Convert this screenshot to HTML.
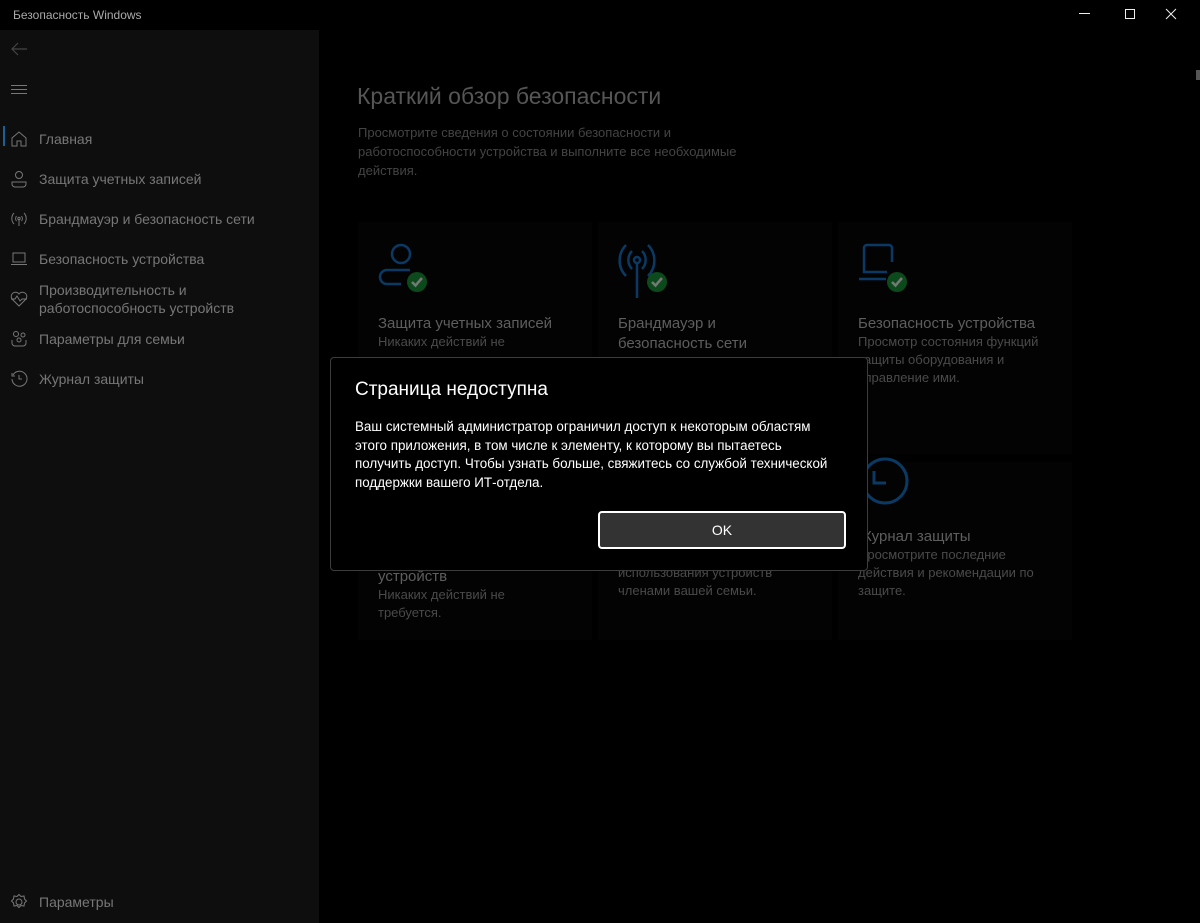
<!DOCTYPE html>
<html><head><meta charset="utf-8"><style>
*{margin:0;padding:0;box-sizing:border-box}
body{width:1200px;height:923px;background:#000;font-family:"Liberation Sans","Noto Sans CJK SC",sans-serif;position:relative;overflow:hidden;color:#777}
.abs{position:absolute}
.side{left:0;top:30px;width:319px;height:893px;background:#0e0e0e}
.nav{position:absolute;left:39px;font-size:14px;color:#777;line-height:18px}
.ic{position:absolute;left:10px}
.card{position:absolute;background:#030303}
.ct{position:absolute;font-size:15px;color:#5e5e5e;line-height:20px}
.cd{position:absolute;font-size:13px;color:#4a4a4a;line-height:18px}
</style></head><body>
<div class="abs" style="left:13px;top:8px;font-size:12px;color:#aaa">Безопасность Windows</div>
<div class="abs" style="left:1079px;top:13px;width:11px;height:1px;background:#eee"></div>
<div class="abs" style="left:1125px;top:9px;width:10px;height:10px;border:1px solid #eee"></div>
<svg class="abs" style="left:1165px;top:8px" width="12" height="12"><path d="M1 1L11 11M11 1L1 11" stroke="#eee" stroke-width="1"/></svg>
<div class="abs" style="left:1196px;top:70px;width:4px;height:10px;background:#555"></div>
<div class="abs side">
<svg class="abs" style="left:10px;top:12px" width="18" height="14"><path d="M17 7H2M8 1L2 7l6 6" stroke="#444" fill="none" stroke-width="1.2"/></svg>
<svg class="abs" style="left:11px;top:55px" width="16" height="10"><path d="M0 .5h16M0 4.5h16M0 8.5h16" stroke="#777" stroke-width="1"/></svg>
<div class="abs" style="left:3px;top:96px;width:2px;height:20px;background:#1d5f9a"></div>
<svg class="ic" style="top:100px" width="18" height="18"><path d="M2 8L9 2l7 6v8h-5v-5H7v5H2z" stroke="#777" fill="none"/></svg>
<div class="nav" style="top:100px">Главная</div>
<svg class="ic" style="top:140px" width="18" height="18"><circle cx="9" cy="5" r="3.5" stroke="#777" fill="none"/><path d="M2 12h14v2a3 3 0 0 1-3 3H5a3 3 0 0 1-3-3z" stroke="#777" fill="none"/></svg>
<div class="nav" style="top:140px">Защита учетных записей</div>
<svg class="ic" style="top:180px" width="18" height="18"><path d="M4 3a8 8 0 0 0 0 11M14 3a8 8 0 0 1 0 11M6.5 6a4 4 0 0 0 0 5M11.5 6a4 4 0 0 1 0 5M9 9v7" stroke="#777" fill="none"/><circle cx="9" cy="8.5" r="1.2" stroke="#777" fill="none"/></svg>
<div class="nav" style="top:180px">Брандмауэр и безопасность сети</div>
<svg class="ic" style="top:220px" width="18" height="18"><rect x="3" y="3" width="12" height="9" stroke="#777" fill="none"/><path d="M1 14.5h16" stroke="#777"/></svg>
<div class="nav" style="top:220px">Безопасность устройства</div>
<svg class="ic" style="top:260px" width="18" height="18"><path d="M9 16L2 9a4 4 0 0 1 7-5 4 4 0 0 1 7 5zM1 9h4l2-3 3 5 2-2h5" stroke="#777" fill="none"/></svg>
<div class="nav" style="top:251px">Производительность и<br>работоспособность устройств</div>
<svg class="ic" style="top:300px" width="18" height="18"><circle cx="6" cy="4" r="2.5" stroke="#777" fill="none"/><circle cx="13" cy="5" r="2" stroke="#777" fill="none"/><circle cx="9" cy="10" r="2" stroke="#777" fill="none"/><path d="M2 10v3a3 3 0 0 0 3 3h8a3 3 0 0 0 3-3v-3" stroke="#777" fill="none"/></svg>
<div class="nav" style="top:300px">Параметры для семьи</div>
<svg class="ic" style="top:340px" width="18" height="18"><path d="M3 5a7.5 7.5 0 1 1-1 4M2 3v3h3M9 5v4h3" stroke="#777" fill="none"/></svg>
<div class="nav" style="top:340px">Журнал защиты</div>
<svg class="ic" style="top:863px" width="18" height="18"><circle cx="9" cy="9" r="3" stroke="#777" fill="none"/><path d="M9 1.5l2 2 3-.5.5 3 2 2-2 2-.5 3-3-.5-2 2-2-2-3 .5-.5-3-2-2 2-2 .5-3 3 .5z" stroke="#777" fill="none"/></svg>
<div class="nav" style="top:863px">Параметры</div>
</div>
<div class="abs" style="left:357px;top:83px;font-size:23px;color:#565656">Краткий обзор безопасности</div>
<div class="abs" style="left:358px;top:123px;font-size:13px;line-height:19px;color:#444;width:400px">Просмотрите сведения о состоянии безопасности и работоспособности устройства и выполните все необходимые действия.</div>
<div class="card" style="left:358px;top:222px;width:234px;height:232px"></div>
<div class="card" style="left:598px;top:222px;width:234px;height:232px"></div>
<div class="card" style="left:838px;top:222px;width:234px;height:232px"></div>
<div class="card" style="left:358px;top:462px;width:234px;height:178px"></div>
<div class="card" style="left:598px;top:462px;width:234px;height:178px"></div>
<div class="card" style="left:838px;top:462px;width:234px;height:178px"></div>
<svg class="abs" style="left:378px;top:242px" width="52" height="52"><circle cx="23" cy="12" r="9" stroke="#0a3a64" stroke-width="2.5" fill="none"/><path d="M32 28H9a7 7 0 0 0 0 14h14" stroke="#0a3a64" stroke-width="2.5" fill="none"/><circle cx="39" cy="40" r="10" fill="#0c4a1c"/><path d="M34 40l3.5 3.5L44 36" stroke="#777" stroke-width="2.5" fill="none"/></svg>
<svg class="abs" style="left:618px;top:242px" width="52" height="58"><path d="M8 3a22 22 0 0 0 0 31M30 3a22 22 0 0 1 0 31M14 9a13 13 0 0 0 0 18M24 9a13 13 0 0 1 0 18M19 20v36" stroke="#0a3a64" stroke-width="2.5" fill="none"/><circle cx="19" cy="18" r="3" stroke="#0a3a64" stroke-width="2.5" fill="none"/><circle cx="39" cy="40" r="10" fill="#0c4a1c"/><path d="M34 40l3.5 3.5L44 36" stroke="#777" stroke-width="2.5" fill="none"/></svg>
<svg class="abs" style="left:858px;top:242px" width="52" height="52"><path d="M29 30H6V6a3 3 0 0 1 3-3h22a3 3 0 0 1 3 3v14M1 37h27" stroke="#0a3a64" stroke-width="2.5" fill="none"/><circle cx="39" cy="40" r="10" fill="#0c4a1c"/><path d="M34 40l3.5 3.5L44 36" stroke="#777" stroke-width="2.5" fill="none"/></svg>
<svg class="abs" style="left:858px;top:455px" width="54" height="54"><circle cx="27" cy="26" r="22" stroke="#0a3a64" stroke-width="3" fill="none"/><path d="M16 16v12h12" stroke="#0a3a64" stroke-width="3" fill="none"/></svg>
<div class="ct" style="left:378px;top:314px">Защита учетных записей</div>
<div class="cd" style="left:378px;top:333px">Никаких действий не</div>
<div class="ct" style="left:618px;top:314px">Брандмауэр и<br>безопасность сети</div>
<div class="ct" style="left:858px;top:314px">Безопасность устройства</div>
<div class="cd" style="left:858px;top:333px;width:200px">Просмотр состояния функций защиты оборудования и управление ими.</div>
<div class="ct" style="left:378px;top:567px">устройств</div>
<div class="cd" style="left:378px;top:586px">Никаких действий не<br>требуется.</div>
<div class="cd" style="left:618px;top:564px">использования устройств<br>членами вашей семьи.</div>
<div class="ct" style="left:858px;top:527px">Журнал защиты</div>
<div class="cd" style="left:858px;top:546px;width:200px">Просмотрите последние действия и рекомендации по защите.</div>
<div class="abs" style="left:330px;top:357px;width:538px;height:214px;background:#000;border:1px solid #3c3c3c;border-radius:4px">
<div class="abs" style="left:24px;top:21px;font-size:19px;color:#fff">Страница недоступна</div>
<div class="abs" style="left:24px;top:60px;width:500px;font-size:13.4px;line-height:18.5px;color:#fff">Ваш системный администратор ограничил доступ к некоторым областям<br>этого приложения, в том числе к элементу, к которому вы пытаетесь<br>получить доступ. Чтобы узнать больше, свяжитесь со службой технической<br>поддержки вашего ИТ-отдела.</div>
<div class="abs" style="left:267px;top:153px;width:248px;height:38px;background:#333;border:2px solid #fff;border-radius:4px;color:#fff;font-size:14px;text-align:center;line-height:34px">OK</div>
</div>
</body></html>
